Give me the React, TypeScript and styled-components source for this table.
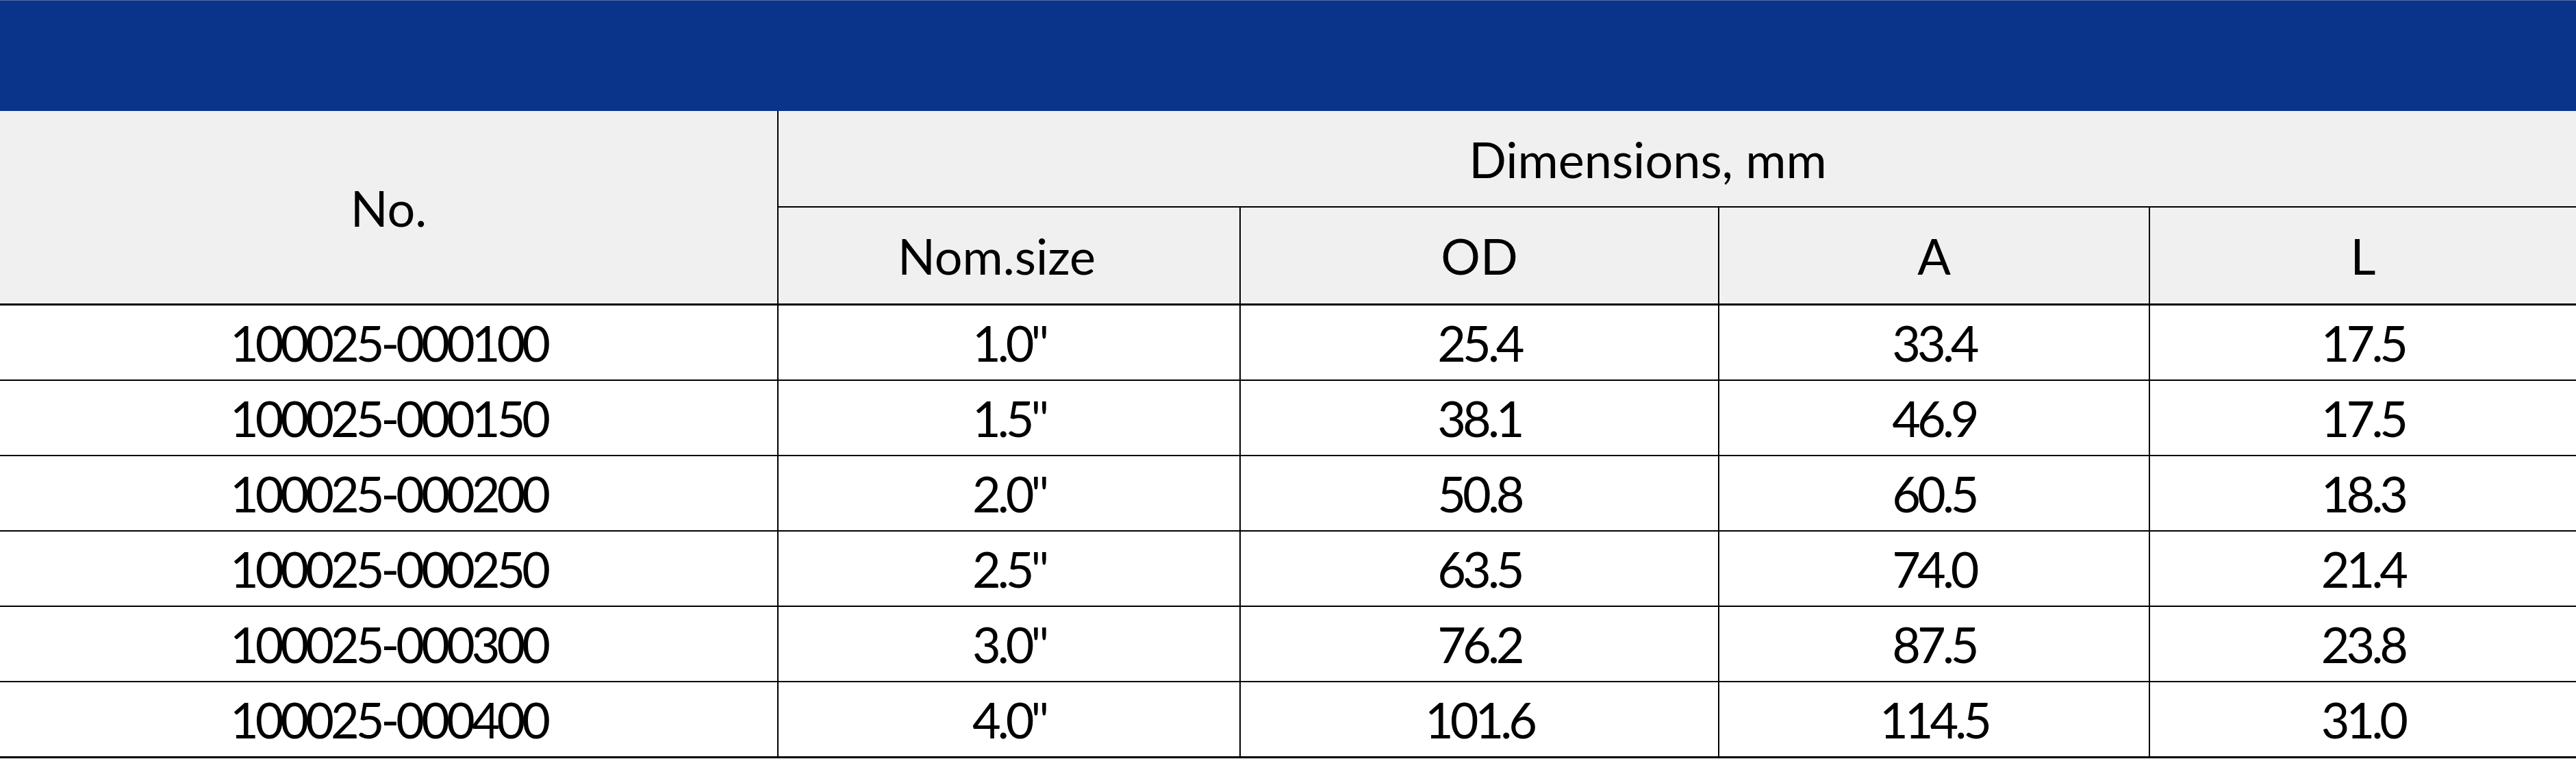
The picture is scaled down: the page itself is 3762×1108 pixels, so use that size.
import React from 'react'
import styled, { createGlobalStyle } from 'styled-components'

interface Row {
  no: string;
  nom: string;
  od: string;
  a: string;
  l: string;
}

const rows: Row[] = [
  { no: '100025-000100', nom: '1.0"', od: '25.4', a: '33.4', l: '17.5' },
  { no: '100025-000150', nom: '1.5"', od: '38.1', a: '46.9', l: '17.5' },
  { no: '100025-000200', nom: '2.0"', od: '50.8', a: '60.5', l: '18.3' },
  { no: '100025-000250', nom: '2.5"', od: '63.5', a: '74.0', l: '21.4' },
  { no: '100025-000300', nom: '3.0"', od: '76.2', a: '87.5', l: '23.8' },
  { no: '100025-000400', nom: '4.0"', od: '101.6', a: '114.5', l: '31.0' },
]

const App = () => {
  return (
    <>
      <GlobalStyle />
      <Page>
        <Banner />
        <Grid>
          <HeadCell $rowSpan={2} $bottom={3}>No.</HeadCell>
          <HeadCell $colSpan={4} $bottom={2} $noRight $shift={86}>Dimensions, mm</HeadCell>
          <HeadCell $bottom={3} $shift={36}>Nom.size</HeadCell>
          <HeadCell $bottom={3}>OD</HeadCell>
          <HeadCell $bottom={3}>A</HeadCell>
          <HeadCell $bottom={3} $noRight>L</HeadCell>

          {rows.map((row, i) => {
            const bottom = i === rows.length - 1 ? 3 : 2
            return (
              <React.Fragment key={row.no}>
                <Cell $bottom={bottom}>{row.no}</Cell>
                <Cell $bottom={bottom}>{row.nom}</Cell>
                <Cell $bottom={bottom}>{row.od}</Cell>
                <Cell $bottom={bottom}>{row.a}</Cell>
                <Cell $bottom={bottom} $noRight>{row.l}</Cell>
              </React.Fragment>
            )
          })}
        </Grid>
      </Page>
    </>
  )
}

const GlobalStyle = createGlobalStyle`
  html, body {
    margin: 0;
    padding: 0;
    background: #ffffff;
  }
`

const Page = styled.div`
  width: 3762px;
  display: flex;
  flex-direction: column;
  font-family: Lato, "Liberation Sans", sans-serif;
  color: #000;
`

const Banner = styled.div`
  height: 162px;
  box-sizing: border-box;
  border-top: 1px solid #5470ad;
  background-color: #0a338a;
`

const Grid = styled.div`
  display: grid;
  grid-template-columns: 1137px 675px 699px 629px 622px;
  grid-template-rows: 141px 143px repeat(5, 110px) 111px;
`

interface CellProps {
  $bottom: number;
  $noRight?: boolean;
  $rowSpan?: number;
  $colSpan?: number;
  $shift?: number;
}

// digits are set tighter than the header words, like the source table
const Cell = styled.div<CellProps>`
  display: flex;
  align-items: center;
  justify-content: center;
  box-sizing: border-box;
  padding-right: ${({ $shift }) => $shift || 0}px;
  font-size: 72px;
  line-height: 1;
  letter-spacing: -5px;
  white-space: nowrap;
  background-color: #ffffff;
  border-bottom: ${({ $bottom }) => $bottom}px solid #000;
  border-right: ${({ $noRight }) => ($noRight ? '0' : '2px solid #000')};
  grid-row: ${({ $rowSpan }) => ($rowSpan ? `span ${$rowSpan}` : 'auto')};
  grid-column: ${({ $colSpan }) => ($colSpan ? `span ${$colSpan}` : 'auto')};
`

const HeadCell = styled(Cell)`
  letter-spacing: 0;
  background-color: #f0f0f0;
`

export default App
